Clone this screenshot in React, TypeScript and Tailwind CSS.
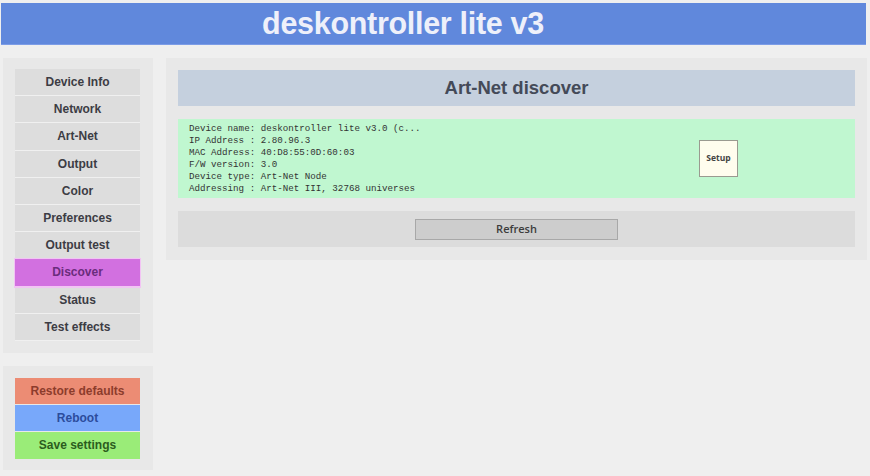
const navItems = [
  "Device Info",
  "Network",
  "Art-Net",
  "Output",
  "Color",
  "Preferences",
  "Output test",
  "Discover",
  "Status",
  "Test effects",
];

const deviceLines = [
  "Device name: deskontroller lite v3.0 (c...",
  "IP Address : 2.80.96.3",
  "MAC Address: 40:D8:55:0D:60:03",
  "F/W version: 3.0",
  "Device type: Art-Net Node",
  "Addressing : Art-Net III, 32768 universes",
];

export default function App() {
  const active = "Discover";

  return (
    <div className="w-[870px] h-[476px] bg-[#efefef] overflow-hidden font-['Liberation_Sans',Arial,sans-serif]">
      {/* Header */}
      <div className="ml-[1px] pt-[3px] w-[865px]">
        <div className="h-[42px] bg-[#6088dc] border-b border-[#7c9ce6] flex items-center justify-center pr-[61px]">
          <h1 className="text-[30.5px] font-bold text-[#eef0fa] tracking-[-0.3px] leading-none">
            deskontroller lite v3
          </h1>
        </div>
      </div>

      <div className="flex items-start gap-[13px] pt-[13px] pl-[3px]">
        {/* Sidebar */}
        <div className="w-[150px] flex flex-col gap-[13px]">
          <div className="bg-[#e8e8e8] pt-[11px] pb-[12px] pl-[12px] pr-[13px]">
            {navItems.map((item) => (
              <button
                key={item}
                className={`w-full h-[27.2px] flex items-center justify-center text-[12px] font-bold border-b ${
                  item === active
                    ? "bg-[#d270e0] text-[#6a2c7c] border-[#f2c4f4] outline outline-1 outline-[#f2c4f4]"
                    : "bg-[#dddddd] text-[#3c3c44] border-[#f0f0f0]"
                }`}
              >
                {item}
              </button>
            ))}
          </div>

          <div className="bg-[#e8e8e8] pt-[12px] pb-[11px] pl-[12px] pr-[13px] flex flex-col gap-px">
            <button className="w-full h-[26px] bg-[#ec8c74] text-[#8c3c2c] text-[12px] font-bold">
              Restore defaults
            </button>
            <button className="w-full h-[26px] bg-[#78a8fa] text-[#2c4c9c] text-[12px] font-bold">
              Reboot
            </button>
            <button className="w-full h-[27px] bg-[#9aec78] text-[#2c5c1e] text-[12px] font-bold">
              Save settings
            </button>
          </div>
        </div>

        {/* Main */}
        <div className="w-[701px] bg-[#e8e8e8] p-[12px] pb-[13px] flex flex-col gap-[13px]">
          <div className="h-[36px] bg-[#c5d0de] flex items-center justify-center">
            <h2 className="text-[18.5px] font-bold text-[#444a58]">Art-Net discover</h2>
          </div>

          <div className="h-[79px] bg-[#c0f7d0] flex items-center pl-[11px]">
            <div className="w-[510px] font-['Liberation_Mono','Courier_New',monospace] text-[9.2px] leading-[12px] text-[#333333]">
              {deviceLines.map((line) => (
                <div key={line} className="whitespace-pre">
                  {line}
                </div>
              ))}
            </div>
            <button className="w-[39px] h-[37px] bg-[#fffdee] border border-[#9a9a90] text-[8.5px] font-bold text-[#444] font-['Open_Sans',sans-serif]">
              Setup
            </button>
          </div>

          <div className="h-[36px] bg-[#dcdcdc] flex items-center justify-center">
            <button className="w-[203px] h-[21px] bg-[#cdcdcd] border border-[#a8a8a8] text-[11px] font-semibold text-[#3c3c3c] font-['Open_Sans',sans-serif]">
              Refresh
            </button>
          </div>
        </div>
      </div>
    </div>
  );
}
